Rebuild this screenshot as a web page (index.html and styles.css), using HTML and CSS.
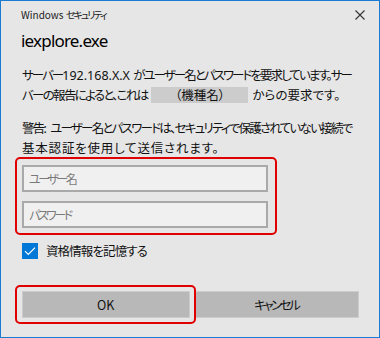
FILE: index.html
```html
<!DOCTYPE html>
<html lang="ja">
  <head>
    <meta charset="UTF-8" />
    <meta name="viewport" content="width=device-width, initial-scale=1.0" />
    <title>Windows セキュリティ</title>
    <link rel="stylesheet" href="styles.css">
  </head>
  <body>
    <div class="dialog">
      <div class="titlebar">
        <span class="caption">Windows <span class="kana">セキュリティ</span></span>
        <svg class="close" width="10" height="10" viewBox="0 0 10 10">
          <path d="M0.5 0.5 L9.5 9.5 M9.5 0.5 L0.5 9.5" stroke="#333" stroke-width="1.1" fill="none" />
        </svg>
      </div>

      <h1 class="app-name">iexplore.exe</h1>

      <p class="message">
        <span class="line l1">サーバー<span class="latin">192.168.X.X </span>がユーザー名とパスワードを要求しています。サー</span>
        <span class="line l2"><span class="l2a">バーの報告によると、これは</span><span class="masked">（機種名）</span>からの要求です。</span>
      </p>
      <p class="message">
        <span class="line l3">警告<span class="latin">: </span>ユーザー名とパスワードは、セキュリティで保護されていない接続で</span>
        <span class="line l4">基本認証を使用して送信されます。</span>
      </p>

      <div class="fields">
        <input class="field" type="text" placeholder="ユーザー名" />
        <input class="field" type="password" placeholder="パスワード" />
      </div>

      <label class="remember">
        <span class="check">
          <svg width="16" height="16" viewBox="0 0 16 16">
            <path d="M3 8.2 L6.3 11.5 L13 4.6" stroke="#fff" stroke-width="1.2" fill="none" />
          </svg>
        </span>
        資格情報を記憶する
      </label>

      <div class="actions">
        <button class="btn btn-ok">OK</button>
        <button class="btn btn-cancel">キャンセル</button>
      </div>
    </div>
  </body>
</html>
```

FILE: styles.css
```css
body {
  margin: 0;
  padding: 0;
  font-family: "Noto Sans CJK JP", "Noto Sans", sans-serif;
  font-feature-settings: "palt" 1;
  color: #111;
}
.dialog {
  width: 380px;
  height: 338px;
  box-sizing: border-box;
  border: 1px solid #1a7bd1;
  background: #e6e6e6;
  padding: 0 20px 0 20px;
  display: flex;
  flex-direction: column;
  overflow: hidden;
}
.titlebar {
  height: 27px;
  display: flex;
  align-items: center;
  justify-content: space-between;
}
.caption {
  font-size: 10px;
  color: #222;
}
.caption .kana {
  letter-spacing: -2px;
}
.close {
  margin-right: -6px;
  margin-top: 1px;
}
.app-name {
  margin: 0;
  font-family: "Noto Sans", sans-serif;
  font-size: 17px;
  font-weight: normal;
  line-height: 26px;
  letter-spacing: -0.8px;
  color: #000;
}
.message {
  margin: 11px 0 0 1px;
  font-size: 12.5px;
  line-height: 19px;
}
.message + .message {
  margin-top: 14px;
}
.line {
  display: block;
  white-space: pre;
}
.latin {
  letter-spacing: 0;
  font-family: "Noto Sans", sans-serif;
}
.l1 {
  letter-spacing: -1.95px;
}
.l2a {
  letter-spacing: -1.7px;
}
.l3 {
  letter-spacing: -1.75px;
}
.l4 {
  letter-spacing: 0.8px;
}
.masked {
  display: inline-block;
  width: 97px;
  margin: 0 4px;
  background: #cccccc;
  text-align: center;
  line-height: 16px;
}
.fields {
  width: 262px;
  box-sizing: border-box;
  margin: 0 0 0 -6px;
  border: 2px solid #e00000;
  border-radius: 5px;
  padding: 6px 0 5px 5px;
  display: flex;
  flex-direction: column;
  gap: 9px;
}
.field {
  width: 246px;
  height: 27px;
  box-sizing: border-box;
  margin: 0;
  border: 2px solid #a9a9a9;
  background: #f0f0f0;
  padding: 0 5px;
  font-family: inherit;
  font-feature-settings: "palt" 1;
  font-size: 12px;
  letter-spacing: -2.5px;
  outline: none;
}
.field::placeholder {
  color: #7a7a7a;
}
.remember {
  margin: 8px 0 0 1px;
  display: flex;
  align-items: center;
  gap: 8px;
  font-size: 12.5px;
  line-height: 16px;
  letter-spacing: -0.9px;
}
.check {
  width: 16px;
  height: 16px;
  background: #0078d7;
  display: block;
}
.check svg {
  display: block;
}
.actions {
  margin: 32px 0 0 1px;
  display: flex;
  gap: 4px;
}
.btn {
  height: 27px;
  margin: 0;
  box-sizing: border-box;
  border: 1px solid #cccccc;
  background: #b8b8b8;
  font-family: inherit;
  font-feature-settings: "palt" 1;
  font-size: 12.5px;
  color: #111;
  padding: 0;
}
.btn-ok {
  width: 168px;
  position: relative;
}
/* red highlight frame drawn over the OK button */
.btn-ok::after {
  content: "";
  position: absolute;
  top: -7px;
  left: -8px;
  right: -7px;
  bottom: -7px;
  border: 2px solid #e00000;
  border-radius: 5px;
}
.btn-cancel {
  width: 166px;
  letter-spacing: -2.5px;
}
```
